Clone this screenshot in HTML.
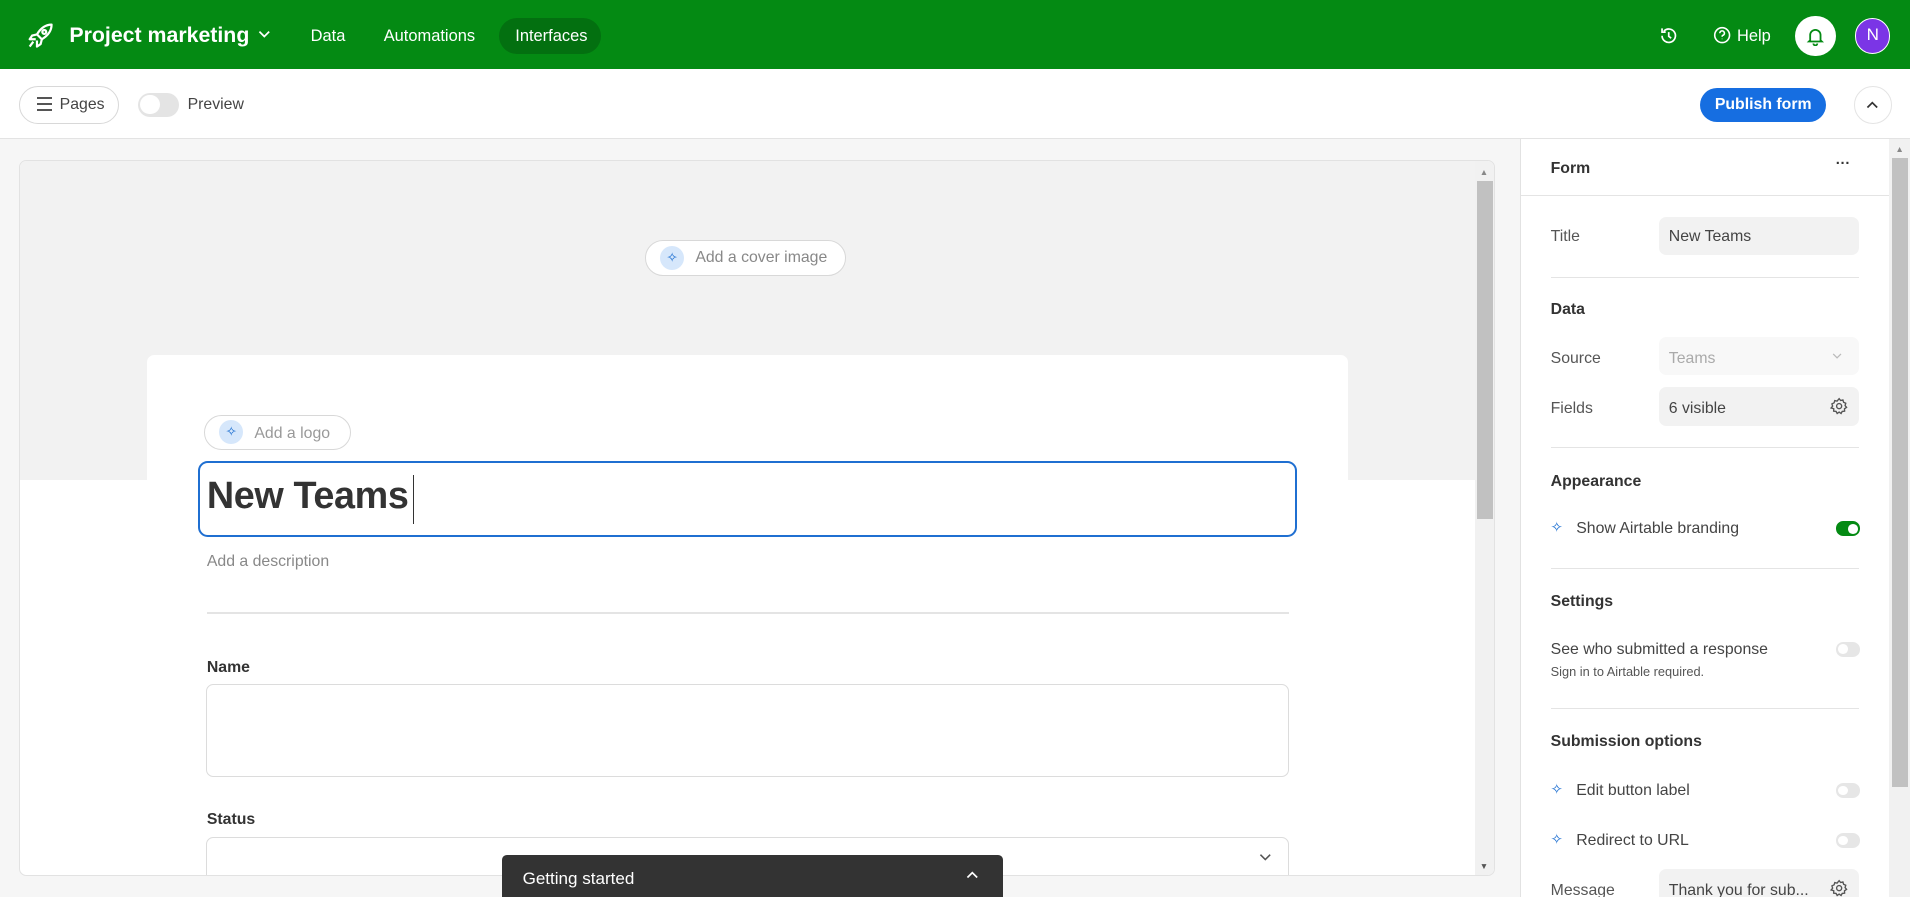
<!DOCTYPE html>
<html><head><meta charset="utf-8"><style>
*{box-sizing:border-box;margin:0;padding:0}
html,body{width:1910px;height:897px;overflow:hidden;background:#fff}
#root{zoom:1.21811;width:1568px;height:736px;position:relative;font-family:"Liberation Sans",sans-serif;color:#333;overflow:hidden;font-size:13px}
.a{position:absolute}
.hdr{left:0;top:0;width:1568px;height:57px;background:#048a13}
.w{color:#fff}
.tb{left:0;top:57px;width:1568px;height:57px;background:#fff;border-bottom:1px solid #e3e3e3}
.main{left:0;top:114px;width:1568px;height:622px;background:#f6f6f6}
.pill{border:1px solid #d8d8d8;border-radius:16px;background:#fff}
.lbl{font-size:13px;color:#444}
.b{font-weight:bold;color:#333}
.div{height:1px;background:#e4e4e4}
.tg{width:20px;height:12px;border-radius:6px;background:#e6e6e6}
.tg::after{content:"";position:absolute;left:2px;top:2px;width:8px;height:8px;border-radius:50%;background:#fff}
.tgon{width:20px;height:12px;border-radius:6px;background:#048a13}
.tgon::after{content:"";position:absolute;left:10px;top:2px;width:8px;height:8px;border-radius:50%;background:#fff}
.inp{background:#f2f2f2;border-radius:6px}
.spk{font-size:12px;color:#1d6fd1}
</style></head><body><div id="root">
<div class="a hdr"></div>
<svg class="a" style="left:21px;top:17px" width="24" height="24" viewBox="0 0 24 24" fill="none" stroke="#fff" stroke-width="1.8" stroke-linejoin="round"><path d="M21 3c-5 0-9 3-12 8l4 4c5-3 8-7 8-12z"/><path d="M9 11l-4 1-2 3 5 0M13 15l-1 4-3 2 0-5"/><path d="M6 17l-3 4"/><circle cx="15" cy="9" r="1.6"/></svg>
<div class="a w" style="left:57px;top:19px;font-size:17.5px;font-weight:bold">Project marketing</div>
<svg class="a" style="left:211px;top:23px" width="12" height="10" viewBox="0 0 12 10"><path d="M2 3l4 4 4-4" stroke="#fff" fill="none" stroke-width="1.4"/></svg>
<div class="a w" style="left:255px;top:22px;font-size:13.5px">Data</div>
<div class="a w" style="left:315px;top:22px;font-size:13.5px">Automations</div>
<div class="a" style="left:410px;top:15px;width:83px;height:29px;border-radius:15px;background:#037010"></div>
<div class="a w" style="left:423px;top:22px;font-size:13.5px">Interfaces</div>
<svg class="a" style="left:1362px;top:21px" width="16" height="16" viewBox="0 0 16 16" fill="none" stroke="#fff" stroke-width="1.4"><path d="M2.5 8a5.5 5.5 0 1 0 1.5-3.8M2.5 2v3h3M8 5v3.5l2 1.5"/></svg>
<svg class="a" style="left:1406px;top:21px" width="15" height="15" viewBox="0 0 16 16" fill="none" stroke="#fff" stroke-width="1.4"><circle cx="8" cy="8" r="6.5"/><path d="M6 6.3a2 2 0 1 1 2.5 1.9c-.4.2-.5.5-.5 1.2M8 11.2v.3"/></svg>
<div class="a w" style="left:1426px;top:22px;font-size:13.5px">Help</div>
<div class="a" style="left:1474px;top:13px;width:33px;height:33px;border-radius:50%;background:#fff"></div>
<svg class="a" style="left:1482px;top:21px" width="17" height="17" viewBox="0 0 16 16" fill="none" stroke="#048a13" stroke-width="1.4"><path d="M4 11V7a4 4 0 0 1 8 0v4l1 1H3zM6.5 13.5a1.5 1.5 0 0 0 3 0"/></svg>
<div class="a" style="left:1523px;top:15px;width:29px;height:29px;border-radius:50%;background:#7b35e6;border:1.5px solid #fff;color:#fff;font-size:14px;text-align:center;line-height:26px">N</div>

<div class="a tb"></div>
<div class="a pill" style="left:16px;top:71px;width:82px;height:31px"></div>
<div class="a" style="left:30px;top:80px;width:13px;font-size:0"><div style="height:1.4px;background:#555;margin-bottom:3.5px"></div><div style="height:1.4px;background:#555;margin-bottom:3.5px"></div><div style="height:1.4px;background:#555"></div></div>
<div class="a lbl" style="left:49px;top:79px">Pages</div>
<div class="a" style="left:113px;top:76px;width:34px;height:20px;border-radius:10px;background:#e4e4e4"></div>
<div class="a" style="left:115px;top:78px;width:16px;height:16px;border-radius:50%;background:#fff"></div>
<div class="a lbl" style="left:154px;top:79px">Preview</div>
<div class="a" style="left:1396px;top:72px;width:103px;height:28px;border-radius:14px;background:#166ee1;color:#fff;font-weight:bold;font-size:13px;text-align:center;line-height:28px">Publish form</div>
<div class="a" style="left:1522px;top:71px;width:31px;height:31px;border-radius:50%;border:1px solid #e4e4e4;background:#fff"></div>
<svg class="a" style="left:1531px;top:81px" width="12" height="10" viewBox="0 0 12 10"><path d="M2 7l4-4 4 4" stroke="#333" fill="none" stroke-width="1.4"/></svg>

<div class="a main"></div>
<div class="a" style="left:16px;top:131px;width:1211px;height:588px;background:#fff;border:1px solid #e2e2e2;border-radius:6px;overflow:hidden">
 <div class="a" style="left:0;top:0;width:1194px;height:262px;background:#f2f2f2"></div>
 <div class="a" style="left:1194px;top:0;width:17px;height:588px;background:#f1f1f1"></div>
 <div class="a" style="left:1196px;top:17px;width:13px;height:277px;background:#c1c1c1"></div>
 <div class="a" style="left:1198px;top:5px;font-size:7px;color:#888">▲</div>
 <div class="a" style="left:1198px;top:575px;font-size:7px;color:#555">▼</div>
 <div class="a pill" style="left:513px;top:65px;width:165px;height:30px"></div>
 <div class="a" style="left:525px;top:70px;width:20px;height:20px;border-radius:50%;background:#d6e7fb;color:#1d6fd1;font-size:11px;text-align:center;line-height:20px">✧</div>
 <div class="a" style="left:554px;top:73px;color:#888;font-size:13px">Add a cover image</div>
 <div class="a" style="left:104px;top:160px;width:986px;height:440px;background:#fff;border-radius:6px"></div>
 <div class="a pill" style="left:151px;top:209px;width:120px;height:29px"></div>
 <div class="a" style="left:163px;top:213px;width:20px;height:20px;border-radius:50%;background:#d6e7fb;color:#1d6fd1;font-size:11px;text-align:center;line-height:20px">✧</div>
 <div class="a" style="left:192px;top:217px;color:#999;font-size:13px">Add a logo</div>
 <div class="a" style="left:146px;top:247px;width:902px;height:62px;border:2px solid #1f6fd1;border-radius:8px"></div>
 <div class="a" style="left:153px;top:258px;font-size:31px;font-weight:bold;color:#333;letter-spacing:-.3px">New Teams</div>
 <div class="a" style="left:322px;top:258px;width:1px;height:40px;background:#333"></div>
 <div class="a" style="left:153px;top:322px;color:#888;font-size:13px">Add a description</div>
 <div class="a div" style="left:153px;top:371px;width:888px"></div>
 <div class="a b" style="left:153px;top:409px">Name</div>
 <div class="a" style="left:152px;top:430px;width:889px;height:76px;border:1px solid #dcdcdc;border-radius:6px"></div>
 <div class="a b" style="left:153px;top:534px">Status</div>
 <div class="a" style="left:152px;top:555px;width:889px;height:40px;border:1px solid #dcdcdc;border-radius:6px"></div>
 <svg class="a" style="left:1016px;top:567px" width="12" height="10" viewBox="0 0 12 10"><path d="M2 3l4 4 4-4" stroke="#555" fill="none" stroke-width="1.3"/></svg>
</div>
<div class="a" style="left:412px;top:702px;width:411px;height:40px;background:#333;border-radius:4px 4px 0 0"></div>
<div class="a" style="left:429px;top:713px;color:#fff;font-size:14px">Getting started</div>
<svg class="a" style="left:792px;top:713px" width="12" height="10" viewBox="0 0 12 10"><path d="M2 7l4-4 4 4" stroke="#fff" fill="none" stroke-width="1.4"/></svg>

<div class="a" style="left:1248px;top:114px;width:303px;height:622px;background:#fff;border-left:1px solid #e2e2e2"></div>
<div class="a" style="left:1551px;top:114px;width:17px;height:622px;background:#f1f1f1"></div>
<div class="a" style="left:1553px;top:130px;width:13px;height:516px;background:#c1c1c1"></div>
<div class="a" style="left:1556px;top:118px;font-size:7px;color:#888">▲</div>
<div class="a b" style="left:1273px;top:131px">Form</div>
<div class="a" style="left:1507px;top:128px;font-weight:bold;font-size:12px">···</div>
<div class="a div" style="left:1249px;top:160px;width:302px"></div>
<div class="a lbl" style="left:1273px;top:187px;color:#555">Title</div>
<div class="a inp" style="left:1362px;top:178px;width:164px;height:31px"></div>
<div class="a lbl" style="left:1370px;top:187px">New Teams</div>
<div class="a div" style="left:1273px;top:227px;width:253px"></div>
<div class="a b" style="left:1273px;top:247px">Data</div>
<div class="a lbl" style="left:1273px;top:287px;color:#555">Source</div>
<div class="a" style="left:1362px;top:277px;width:164px;height:31px;background:#f8f8f8;border-radius:6px"></div>
<div class="a lbl" style="left:1370px;top:287px;color:#aaa">Teams</div>
<svg class="a" style="left:1503px;top:288px" width="10" height="8" viewBox="0 0 12 10"><path d="M2 3l4 4 4-4" stroke="#bbb" fill="none" stroke-width="1.3"/></svg>
<div class="a lbl" style="left:1273px;top:328px;color:#555">Fields</div>
<div class="a inp" style="left:1362px;top:318px;width:164px;height:32px"></div>
<div class="a lbl" style="left:1370px;top:328px">6 visible</div>
<svg class="a" style="left:1502px;top:326px" width="15" height="15" viewBox="0 0 16 16" fill="none" stroke="#555" stroke-width="1.2"><circle cx="8" cy="8" r="2.2"/><path d="M8 1.5l1.3 1.6 2-.5.6 2 1.9.9-.6 2 1.3 1.6-1.8 1.2.1 2.1-2.1.2-1 1.8-1.7-1.2-1.7 1.2-1-1.8-2.1-.2.1-2.1L1 9.6 2.3 8l-.6-2 1.9-.9.6-2 2 .5z"/></svg>
<div class="a div" style="left:1273px;top:367px;width:253px"></div>
<div class="a b" style="left:1273px;top:388px">Appearance</div>
<div class="a spk" style="left:1273px;top:426px">✧</div>
<div class="a lbl" style="left:1294px;top:427px">Show Airtable branding</div>
<div class="a tgon" style="left:1507px;top:428px"></div>
<div class="a div" style="left:1273px;top:466px;width:253px"></div>
<div class="a b" style="left:1273px;top:487px">Settings</div>
<div class="a lbl" style="left:1273px;top:526px">See who submitted a response</div>
<div class="a" style="left:1273px;top:545px;font-size:10.5px;color:#555">Sign in to Airtable required.</div>
<div class="a tg" style="left:1507px;top:527px"></div>
<div class="a div" style="left:1273px;top:581px;width:253px"></div>
<div class="a b" style="left:1273px;top:602px">Submission options</div>
<div class="a spk" style="left:1273px;top:641px">✧</div>
<div class="a lbl" style="left:1294px;top:642px">Edit button label</div>
<div class="a tg" style="left:1507px;top:643px"></div>
<div class="a spk" style="left:1273px;top:682px">✧</div>
<div class="a lbl" style="left:1294px;top:683px">Redirect to URL</div>
<div class="a tg" style="left:1507px;top:684px"></div>
<div class="a lbl" style="left:1273px;top:724px;color:#555">Message</div>
<div class="a inp" style="left:1362px;top:713px;width:164px;height:32px"></div>
<div class="a lbl" style="left:1370px;top:724px">Thank you for sub...</div>
<svg class="a" style="left:1502px;top:722px" width="15" height="15" viewBox="0 0 16 16" fill="none" stroke="#555" stroke-width="1.2"><circle cx="8" cy="8" r="2.2"/><path d="M8 1.5l1.3 1.6 2-.5.6 2 1.9.9-.6 2 1.3 1.6-1.8 1.2.1 2.1-2.1.2-1 1.8-1.7-1.2-1.7 1.2-1-1.8-2.1-.2.1-2.1L1 9.6 2.3 8l-.6-2 1.9-.9.6-2 2 .5z"/></svg>
</div></body></html>
